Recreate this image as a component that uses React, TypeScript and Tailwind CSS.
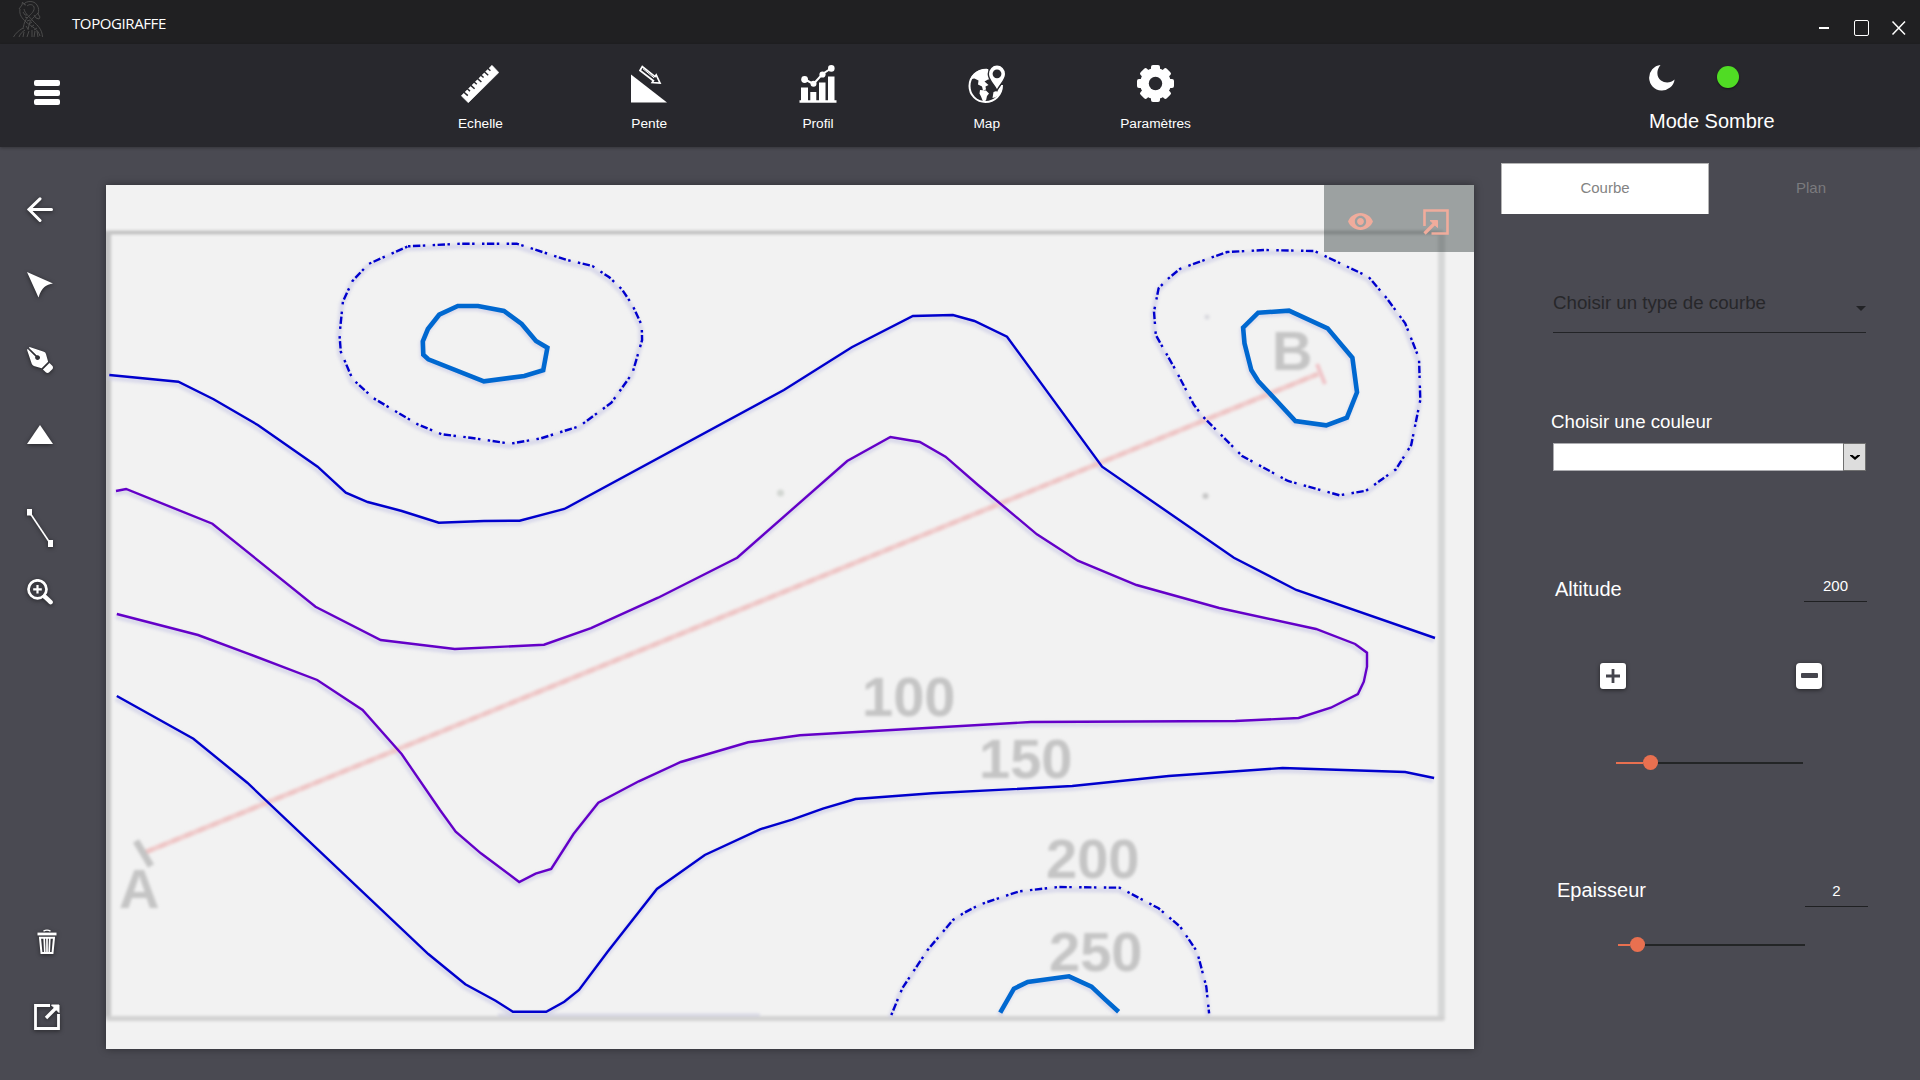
import React from "react";
import { FaPenNib } from "react-icons/fa";

const ARIAL = "font-['Liberation_Sans',Arial,sans-serif]";
const ICON_SHADOW = "drop-shadow-[0_1px_2px_rgba(0,0,0,0.55)]";

/* ---------- contour data ---------- */

const BLUE = "#0000cd";
const PURPLE = "#6400c8";
const AZURE = "#0068d0";

type Curve = { color: string; width: number; dashed?: boolean; closed?: boolean; points: string };

const curves: Curve[] = [
  {
    color: BLUE,
    width: 2.4,
    points:
      "109.3,375 178.3,381.7 213.6,399.3 257.8,425 317.6,466.7 345.8,492.7 367.7,502 401.8,511 438.8,522.7 483.9,521 519.6,520.7 564.3,509 783.9,390 851.8,347.3 912.9,316 952.9,315 974.4,321 1007,336.7 1102.1,466.7 1233.9,557.7 1296.3,590 1435,638",
  },
  {
    color: PURPLE,
    width: 2.4,
    points:
      "116,491 126.1,489 212.4,523.7 315.5,606.7 380.7,640 454.8,649 544,644.7 591,628.2 658.1,597.7 737.2,557.7 847.2,461 890.4,437 919.8,442 945.5,456.7 978,485 1036.9,534.3 1077.8,560.7 1136.5,585 1219.2,608 1316,629 1355.1,644 1367,652.7 1367,666.7 1363.8,681.7 1357.9,694 1330.8,707.7 1298.6,718 1235.3,721 1030.9,722 800,735.3 748.2,742.3 680.8,762 638.8,781.3 598.3,802.7 573.5,834 551.2,869 535.6,873.7 519.2,882 480.9,853.3 455.7,831.7 440,810 401.8,754.3 362.6,710 317.2,680 247.3,653.3 198,635 116.8,614",
  },
  {
    color: BLUE,
    width: 2.4,
    points:
      "116.8,696 193.4,738.7 247.3,782.7 428.3,954 465.3,984.3 495.6,1000.7 512.9,1011.7 546.2,1011.7 564.3,1001.7 579,990 607.2,952.3 656.9,889 704.8,855 760,829.3 792.1,819.7 822.9,808.7 855.5,799 932.2,793.3 1072.3,786 1168.7,776 1282.6,768 1405.2,772 1434.1,778",
  },
  {
    color: BLUE,
    width: 2.4,
    dashed: true,
    closed: true,
    points:
      "408,246.3 462,243.7 516.7,243.7 567.2,260 592.4,266 609.3,277.3 621.9,289.3 632.4,305 641.7,325 642.1,340 632.4,373.3 611.4,402.7 579.8,426 541.1,438.3 510.4,443.7 470.4,437.7 441.8,434.3 417.8,424.3 373.6,398.3 352.5,379 340.8,351.7 339.5,335 342.9,301.7 352.5,281 368.5,264",
  },
  {
    color: BLUE,
    width: 2.4,
    dashed: true,
    closed: true,
    points:
      "1227,252 1265.1,250 1314.3,251 1368.4,276.7 1386.8,298.3 1405.2,323.3 1419,358.3 1420.3,400 1411.2,445 1396,469.3 1366.1,490.7 1339.5,495.3 1288,481 1242.2,456 1203.1,416.7 1194,405 1175.6,370 1155.8,335 1154,311.7 1158.6,288.3 1167.8,279 1180.2,268.7",
  },
  {
    color: BLUE,
    width: 2.4,
    dashed: true,
    points:
      "891.3,1015 902.3,988.3 927.6,950 952.9,920 964.3,912.7 980.4,904.3 1019.4,891.3 1058.5,887 1119.6,887.7 1158.6,908.3 1180.2,926.7 1197.1,951.7 1206.3,986.7 1209.1,1013.3",
  },
  {
    color: AZURE,
    width: 4.6,
    closed: true,
    points:
      "457.8,306 478,306 504,311 521.7,324 536,341 547.4,347.7 543.2,370.3 524.3,376 483.9,381.3 428.3,359.3 423.3,354.7 422.8,341.3 427.9,329 439.2,314.7",
  },
  {
    color: AZURE,
    width: 4.6,
    closed: true,
    points:
      "1258.2,312.7 1289,310.7 1327.6,328.3 1352.4,357.7 1357,392.3 1346.9,417.7 1326.2,425.3 1295.4,421 1258.2,381 1251.3,370 1244.5,343.3 1243.1,327.7",
  },
  {
    color: AZURE,
    width: 4.6,
    points: "1000.2,1012.7 1013.9,988.7 1027.7,982 1069,976.3 1091.5,986.7 1105.3,999.7 1118.6,1011.7",
  },
];

const mapLabels = [
  { x: 862, y: 716, text: "100" },
  { x: 979, y: 777.5, text: "150" },
  { x: 1046, y: 878, text: "200" },
  { x: 1049, y: 971, text: "250" },
  { x: 1272, y: 369.5, text: "B" },
  { x: 119, y: 908, text: "A" },
];

function Line({ c, ghost }: { c: Curve; ghost?: boolean }) {
  const props = {
    points: c.points,
    fill: "none",
    stroke: ghost ? "#cdcde6" : c.color,
    strokeWidth: ghost ? 5 : c.width,
    strokeDasharray: c.dashed && !ghost ? "2.47 2.47 7.4 2.47 2.47 7.4" : undefined,
  };
  return c.closed ? <polygon {...props} /> : <polyline {...props} />;
}

function ContourMap() {
  return (
    <svg width="1368" height="864" viewBox="106 185 1368 864" className="block">
      <defs>
        <filter id="soft" x="0" y="0" width="1920" height="1080" filterUnits="userSpaceOnUse">
          <feGaussianBlur stdDeviation="1.8" />
        </filter>
      </defs>
      <g filter="url(#soft)">
        <path d="M100 232.500H1443" stroke="#bcbcbc" strokeWidth="3.500" fill="none" />
        <path d="M107.500 232V1018" stroke="#c4c4c4" strokeWidth="7" fill="none" />
        <path d="M1441.500 232V1020" stroke="#d6d7d7" strokeWidth="7" fill="none" />
        <path d="M106 1018.500H1444" stroke="#d2d2d2" strokeWidth="5" fill="none" />
        <path d="M498 1015H760" stroke="#d8d8e6" strokeWidth="3" fill="none" />
        <g transform="translate(-1 2.500)" opacity="0.65">
          {curves.map((c, i) => (
            <Line key={i} c={c} ghost />
          ))}
        </g>
        <path d="M146 852L1318 374" stroke="#f0cccc" strokeWidth="5" fill="none" />
        <path d="M146 852L1318 374" stroke="#eec5c5" strokeWidth="4.500" strokeDasharray="8 6" fill="none" />
        <path d="M1317 364L1325 384" stroke="#f0c4c8" strokeWidth="4" fill="none" />
        <path d="M136 841L151 866" stroke="#c4c4c4" strokeWidth="7" fill="none" />
        <circle cx="1207" cy="317" r="2.500" fill="#d8d8de" />
        <circle cx="1205.500" cy="496" r="3" fill="#c6c6c6" />
        <circle cx="780.500" cy="493" r="3.500" fill="#d2d6d2" />
        {mapLabels.map((l) => (
          <text
            key={l.text}
            x={l.x}
            y={l.y}
            fontFamily="Liberation Sans, Arial, sans-serif"
            fontWeight="700"
            fontSize="56"
            fill="#c5c5c5"
          >
            {l.text}
          </text>
        ))}
      </g>
      {curves.map((c, i) => (
        <Line key={i} c={c} />
      ))}
    </svg>
  );
}

/* ---------- icons ---------- */

function GiraffeLogo() {
  return (
    <svg width="34" height="38" viewBox="0 0 34 38" fill="none" stroke="#4b4b4b" strokeWidth="1">
      <path d="M7 9l3-4 .5-3 1.500 2.500 2 .5" />
      <path d="M12 4c2-3 10-4 13 1 2 3 2 6 1 9l2 3-1 2-3-1-2-3" />
      <path d="M15 6c2-2 6-2 7 1 1 4-3 7-6 10-4 4-4 8-5 12" />
      <path d="M26 13c-3 4-8 6-9 12l-1 5" />
      <path d="M8 9c-1 6 2 9 6 13 6 5 12 7 14 14" />
      <path d="M12 9c1 5 6 8 9 12 5 5 9 8 9.500 16" />
      <path d="M11 28c-5 3-7 5-9.500 9M13 30c-3 2-5 4-6 7M11 12l2 3 2 0M13 17l3 1M15 21l3-1M17 24l3-2M14 26l2 3M19 27l3-2M22 30l3-2M17 31l-2 6M20 30v7M23 31l-1 6M25 31l1 6M12 32l-1 5" />
    </svg>
  );
}

function RulerIcon() {
  return (
    <svg width="38" height="38" viewBox="0 0 38 38">
      <path d="M31 .3L37.800 7.500 7.300 37.700 .3 30.800z" fill="#fff" stroke="#fff" strokeWidth=".6" strokeLinejoin="round" />
      <path
        d="M3 27.200l3.800 3.400M6.400 23.800l2.600 2.300M9.800 20.400l3.800 3.400M13.200 17l2.600 2.300M16.600 13.600l3.800 3.400M20 10.200l2.600 2.300M23.400 6.800l3.800 3.400M26.800 3.400l2.600 2.300"
        stroke="#28282d"
        strokeWidth="1.500"
      />
    </svg>
  );
}

function SlopeIcon() {
  return (
    <svg width="38" height="38" viewBox="0 0 38 38">
      <path d="M1 9.500L37 37.500H1z" fill="#fff" />
      <path d="M10 5.500l2.300-4L25 11.600l1.200-1.600 3.800 8-7.800-.5 1.200-1.800z" fill="none" stroke="#fff" strokeWidth="1.700" />
      <path d="M13 3.800l11 9" stroke="#fff" strokeWidth="1" />
    </svg>
  );
}

function ChartIcon() {
  return (
    <svg width="38" height="38" viewBox="0 0 38 38" fill="#fff">
      <path d="M.5 35.300h37v2.400H.500zM2 22.500h7V36H2zM11.300 27h6V36h-6zM20 17.500h6.500V36H20zM29 11.500h6.500V36H29z" />
      <path d="M6 14.500l8.500 4.500 9-10L32 3.500" fill="none" stroke="#fff" strokeWidth="2" />
      <circle cx="5.600" cy="14.500" r="3.400" />
      <circle cx="14.500" cy="18.800" r="3" />
      <circle cx="23.500" cy="9.500" r="3.100" />
      <circle cx="32.300" cy="3.400" r="3.300" />
    </svg>
  );
}

function GlobePinIcon() {
  return (
    <svg width="38" height="38" viewBox="0 0 38 38">
      <path d="M19 4.800C9 4.300 1.500 12 1.500 21S8.500 37 17.500 37 34 30 34 20" fill="none" stroke="#fff" strokeWidth="2" />
      <path
        d="M20 4C12 3.500 5 7.500 2.500 14l4-.5 4 2-.5 4 4 2 1 4 3-1-.5-3 3-1.500-4-3.500 3.500-2 4-.5-3-4 1-3zM12 25l6 .5 3 3-2 2.500-1 4.500-3 1-2-5-1.500-3zM24.500 33l1-6 3-1 5-6 .8 2C34 27 31 32 24.500 33z"
        fill="#fff"
      />
      <path d="M29 25.500c-2.500-6-8.700-10-8.700-16.500a8.700 9.200 0 0 1 17.400 0c0 6.500-6.200 10.500-8.700 16.500z" fill="#fff" stroke="#28282d" strokeWidth="1.400" />
      <circle cx="29" cy="8.800" r="4.400" fill="#28282d" />
    </svg>
  );
}

function GearIcon() {
  return (
    <svg width="38" height="38" viewBox="0 0 38 38">
      <g fill="#fff">
        {[0, 45, 90, 135].map((a) => (
          <rect key={a} x="14" y="0" width="9" height="37" rx="2" transform={`rotate(${a} 18.5 18.5)`} />
        ))}
        <circle cx="18.500" cy="18.500" r="15.400" />
      </g>
      <circle cx="18.500" cy="18.500" r="6.700" fill="#28282d" />
    </svg>
  );
}

function EyeIcon() {
  return (
    <svg width="25" height="17" viewBox="1 4.500 22 15" fill="#f0ac9c">
      <path d="M12 4.500C7 4.500 2.730 7.610 1 12c1.730 4.390 6 7.500 11 7.500s9.270-3.110 11-7.500c-1.730-4.390-6-7.500-11-7.500zM12 17c-2.760 0-5-2.240-5-5s2.240-5 5-5 5 2.240 5 5-2.240 5-5 5zm0-8c-1.660 0-3 1.340-3 3s1.340 3 3 3 3-1.340 3-3-1.340-3-3-3z" />
    </svg>
  );
}

function CollapseIcon() {
  return (
    <svg width="26" height="26" viewBox="0 0 26 26" fill="none" stroke="#f0ac9c" strokeWidth="2.600">
      <path d="M1.500 17V1.500h23v23H8.500" />
      <path d="M1.500 24.500L12.500 13.500" strokeWidth="3.200" />
      <path d="M7 11.500H14.500v7z" fill="#f0ac9c" strokeWidth="1" />
    </svg>
  );
}

const backIcon = (
  <svg width="26" height="26" viewBox="0 0 26 26" fill="none" stroke="#fff" strokeWidth="3" strokeLinecap="round">
    <path d="M2 12.500H24.500M13 1.800L2 12.500l11 11" />
  </svg>
);
const cursorIcon = (
  <svg width="26" height="26" viewBox="0 0 26 26" fill="#fff">
    <path d="M0 0l26 11.500c-7 1.500-11 3-14.500 14z" />
  </svg>
);
const triangleIcon = (
  <svg width="26" height="19" viewBox="0 0 26 19" fill="#fff">
    <path d="M13 0l13 19H0z" />
  </svg>
);
const segmentIcon = (
  <svg width="26" height="38" viewBox="0 0 26 38" fill="#fff">
    <path d="M3 4l20 30" stroke="#fff" strokeWidth="1.600" />
    <path d="M0 0h5v6.500H0zM21 31h5v7h-5z" />
  </svg>
);
const zoomIcon = (
  <svg width="26" height="26" viewBox="0 0 26 26" fill="none" stroke="#fff">
    <circle cx="10.500" cy="10.300" r="9" strokeWidth="2.700" />
    <path d="M10.500 6v8.600M6.200 10.300h8.600" strokeWidth="2.200" />
    <path d="M17.800 17.600l5.800 5.600" strokeWidth="4.400" strokeLinecap="round" />
  </svg>
);
const trashIcon = (
  <svg width="20" height="26" viewBox="0 0 20 26" fill="none" stroke="#fff">
    <path d="M6.500 2.200q3.500-2.200 7 0" strokeWidth="1.400" />
    <path d="M.5 5h19" strokeWidth="2.800" />
    <path d="M3 8.800h14L15.500 24h-11z" strokeWidth="2" />
    <path d="M7.200 9l.6 14M10 9v14M12.800 9l-.6 14" strokeWidth="1.700" />
  </svg>
);
const exportIcon = (
  <svg width="26" height="26" viewBox="0 0 26 26" fill="none" stroke="#fff" strokeWidth="2.800">
    <path d="M16 1.500H1.500v23h23V10" />
    <path d="M12 14L22 4" strokeWidth="3.400" />
    <path d="M17.500 1H25v7.500z" fill="#fff" strokeWidth="1" />
  </svg>
);

/* ---------- pieces ---------- */

const navItems = [
  { label: "Echelle", icon: <RulerIcon /> },
  { label: "Pente", icon: <SlopeIcon /> },
  { label: "Profil", icon: <ChartIcon /> },
  { label: "Map", icon: <GlobePinIcon /> },
  { label: "Paramètres", icon: <GearIcon /> },
];

function Slider({ value }: { value: number }) {
  return (
    <div className="flex h-[15px] w-[187px] items-center">
      <div className="h-[2px] bg-[#e87050]" style={{ width: value - 7 }} />
      <div className="size-[15px] shrink-0 rounded-full bg-[#e87050]" />
      <div className="h-[2px] flex-1 bg-[#232526]" />
    </div>
  );
}

function NumberField({ value }: { value: string }) {
  return (
    <div className="h-[26px] w-[63px] border-b border-[#1f2022] text-center text-[15px] leading-5 text-white">{value}</div>
  );
}

export default function App() {
  return (
    <div className={`flex h-[1080px] w-[1920px] flex-col overflow-hidden bg-[#4a4a52] text-white ${ARIAL}`}>
      <header className="flex h-[44px] shrink-0 bg-[#202022]">
        <div className="ml-[12px]">
          <GiraffeLogo />
        </div>
        <div className="ml-[26px] mt-[13px] font-['Open_Sans',sans-serif] text-[15px] leading-5 tracking-[-0.4px]">
          TOPOGIRAFFE
        </div>
        <svg className="ml-auto mr-[14px] mt-[20px]" width="87" height="16" viewBox="0 0 87 16" fill="none" stroke="#fff">
          <path d="M0 8h10" strokeWidth="2" />
          <rect x="35.500" y=".5" width="14" height="15" rx="1.500" />
          <path d="M73.500 1.500l12.500 13M86 1.500l-12.500 13" strokeWidth="1.500" />
        </svg>
      </header>

      <div className="z-10 flex h-[103px] shrink-0 bg-[#28282d] shadow-[0_1px_3px_rgba(0,0,0,0.3)]">
        <div className="ml-[34px] mt-[36px] flex w-[26px] flex-col gap-[3.500px]">
          <div className="h-[6px] rounded-[2px] bg-white" />
          <div className="h-[6px] rounded-[2px] bg-white" />
          <div className="h-[6px] rounded-[2px] bg-white" />
        </div>
        <nav className="ml-[336px] grid w-[844px] grid-cols-5">
          {navItems.map((n) => (
            <div key={n.label} className="flex flex-col items-center pt-[21px]">
              {n.icon}
              <span className="mt-[13px] text-[13.700px] leading-4">{n.label}</span>
            </div>
          ))}
        </nav>
        <div className="ml-[409px] pt-[21px]">
          <div className="flex items-start">
            <svg width="26" height="26" viewBox="0 0 26 26" fill="#fff">
              <path d="M11.500 0A12.800 12.800 0 1 0 25.600 14.500 C22 18 16 18.500 12 15.500 C7.500 12 7 5.500 11.500 0z" />
            </svg>
            <div className="ml-[42px] mt-[1px] size-[22px] rounded-full bg-[#50dc24] shadow-[0_1px_2px_rgba(0,0,0,0.5)]" />
          </div>
          <div className="mt-[18px] whitespace-nowrap text-[20px] leading-6">Mode Sombre</div>
        </div>
      </div>

      <div className="flex flex-1">
        <aside className="flex w-[106px] shrink-0 flex-col">
          <div className={`ml-[27px] mt-[50px] ${ICON_SHADOW}`}>{backIcon}</div>
          <div className={`ml-[27px] mt-[49px] ${ICON_SHADOW}`}>{cursorIcon}</div>
          <div className={`ml-[27px] mt-[49px] ${ICON_SHADOW}`}>
            <FaPenNib className="size-[26px] rotate-90" />
          </div>
          <div className={`ml-[27px] mt-[52px] ${ICON_SHADOW}`}>{triangleIcon}</div>
          <div className={`ml-[27px] mt-[65px] ${ICON_SHADOW}`}>{segmentIcon}</div>
          <div className={`ml-[27px] mt-[32px] ${ICON_SHADOW}`}>{zoomIcon}</div>
          <div className={`ml-[37px] mt-[324px] ${ICON_SHADOW}`}>{trashIcon}</div>
          <div className={`ml-[34px] mt-[49px] ${ICON_SHADOW}`}>{exportIcon}</div>
        </aside>

        <main className="relative mt-[38px] h-[864px] w-[1368px] shrink-0 bg-[#f2f2f2] shadow-[0_0_8px_rgba(0,0,0,0.4)]">
          <ContourMap />
          <div className="absolute right-0 top-0 flex h-[67px] w-[150px] bg-[rgba(52,61,63,0.45)]">
            <div className="ml-[24px] mt-[28px]">
              <EyeIcon />
            </div>
            <div className="ml-[50px] mt-[24px]">
              <CollapseIcon />
            </div>
          </div>
        </main>

        <section className="ml-[27px] w-[419px]">
          <div className="mt-[16px] flex h-[51px] text-center text-[15px] leading-[50px]">
            <div className="w-[208px] border border-b-0 border-[#b4b4b4] bg-white text-[#838383]">
              <div className="-mt-px">Courbe</div>
            </div>
            <div className="w-[204px] text-[#7b7b7e]">Plan</div>
          </div>

          <div className="ml-[52px] mt-[76px] flex h-[43px] w-[313px] justify-between border-b border-[#222326] text-[18.700px] leading-6 text-[#27272a]">
            <span className="pt-px">Choisir un type de courbe</span>
            <svg className="mt-[16px]" width="10" height="5" viewBox="0 0 10 5" fill="#222326">
              <path d="M0 0h10L5 5z" />
            </svg>
          </div>

          <div className="ml-[50px] mt-[77px] text-[18.700px] leading-6">Choisir une couleur</div>
          <div className="ml-[52px] mt-[9px] flex h-[28px] w-[313px] border border-[#acacb0] bg-white">
            <div className="flex-1" />
            <div className="-my-px -mr-px flex w-[23px] items-center justify-center border border-[#707070] bg-[#dddddd]">
              <svg width="10" height="5" viewBox="0 0 10 5" fill="#000">
                <path d="M0 0h2.500L5 2 7.500 0H10v.8L5 5 0 .8z" />
              </svg>
            </div>
          </div>

          <div className="ml-[54px] mt-[105px] flex w-[312px] justify-between">
            <span className="pt-px text-[20px] leading-6">Altitude</span>
            <NumberField value="200" />
          </div>
          <div className="ml-[99px] mt-[61px] flex w-[222px] justify-between">
            <div className={`flex size-[26px] items-center justify-center rounded-[3px] bg-white ${ICON_SHADOW}`}>
              <svg width="14" height="14" viewBox="0 0 14 14" stroke="#45454d" strokeWidth="2.800">
                <path d="M7 0v14M0 7h14" />
              </svg>
            </div>
            <div className={`flex size-[26px] items-center justify-center rounded-[4px] bg-white ${ICON_SHADOW}`}>
              <div className="mb-px h-[5px] w-[17px] rounded-[1px] bg-[#45454d]" />
            </div>
          </div>
          <div className="ml-[115px] mt-[66px]">
            <Slider value={34} />
          </div>

          <div className="ml-[56px] mt-[108px] flex w-[311px] justify-between">
            <span className="text-[20px] leading-6">Epaisseur</span>
            <div className="pt-[3px]">
              <NumberField value="2" />
            </div>
          </div>
          <div className="ml-[117px] mt-[30px]">
            <Slider value={19} />
          </div>
        </section>
      </div>
    </div>
  );
}
